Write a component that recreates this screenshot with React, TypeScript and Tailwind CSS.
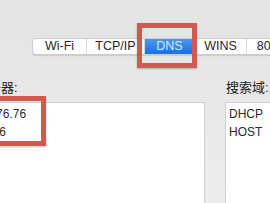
export default function App() {
  const tabs = [
    { label: 'Wi-Fi', w: 'w-[53px]' },
    { label: 'TCP/IP', w: 'w-[58px]' },
    { label: 'DNS', w: 'w-[50px]', active: true },
    { label: 'WINS', w: 'w-[52px]' },
    { label: '802.1X', w: 'w-[60px]' },
  ]

  return (
    <div className="relative w-[270px] h-[203px] overflow-hidden bg-gradient-to-b from-[#e4e4e4] to-[#ececec] font-['Liberation_Sans','Noto_Sans_CJK_SC',sans-serif] text-[#222]">
      {/* Tabs */}
      <div className="ml-[32px] pt-[38px]">
        <div className="flex h-[17px] w-max rounded-[4px] border border-[#cdcdcd] bg-white shadow-[0_1px_1px_rgba(0,0,0,0.12)] overflow-hidden">
          {tabs.map((t, i) => (
            <div
              key={t.label}
              className={
                'shrink-0 flex items-center justify-center text-[12.5px] leading-none ' +
                t.w +
                (i > 0 ? ' border-l border-[#d8d8d8]' : '') +
                (t.active ? ' bg-gradient-to-b from-[#4a97f2] to-[#1d6fe0] text-[#d6ebff]' : ' text-[#262626]')
              }
            >
              {t.label}
            </div>
          ))}
        </div>
      </div>

      {/* Labels + lists */}
      <div className="flex ml-[-50px] mt-[25px]">
        <div className="shrink-0 w-[255px] flex flex-col">
          <div className="ml-[-6px] h-[16px] text-[13px] leading-[16px] whitespace-nowrap">DNS 服务器:</div>
          <div className="mt-[6px] h-[110px] border border-[#cfcfcf] bg-white pt-[2px] pl-[5px] text-[12px] leading-[18px] text-[#2a2a2a]">
            <div>180.76.76.76</div>
            <div>223.6.6.6</div>
          </div>
        </div>
        <div className="shrink-0 ml-[20px] w-[80px] flex flex-col">
          <div className="ml-[1px] h-[16px] text-[13px] leading-[16px] whitespace-nowrap">搜索域:</div>
          <div className="mt-[6px] h-[110px] border border-[#cfcfcf] bg-white pt-[2px] pl-[3px] text-[12px] leading-[18px] text-[#2a2a2a]">
            <div>DHCP</div>
            <div>HOST</div>
          </div>
        </div>
      </div>

      {/* Annotation boxes */}
      <div className="absolute left-[137px] top-[23px] w-[60px] h-[45px] border-[5px] border-[#d2594f] shadow-[0_1px_2px_rgba(0,0,0,0.25)]" />
      <div className="absolute left-[-10px] top-[96px] w-[56px] h-[50px] border-[5px] border-[#d2594f] shadow-[0_1px_2px_rgba(0,0,0,0.25)]" />
    </div>
  )
}
